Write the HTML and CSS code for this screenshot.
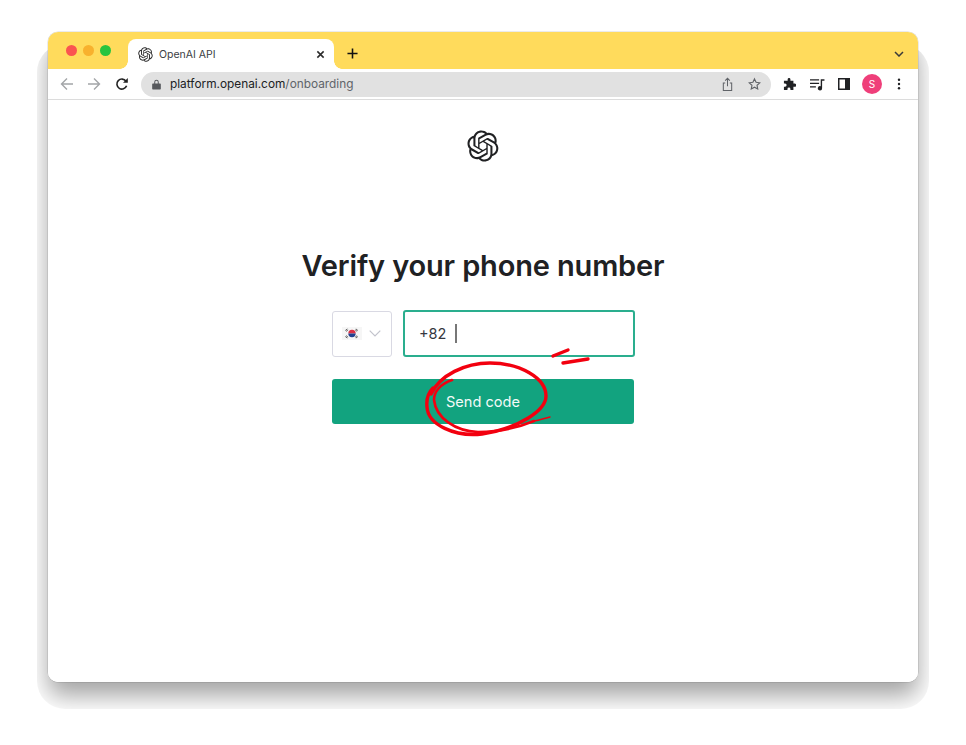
FILE: index.html
```html
<!DOCTYPE html>
<html lang="en">
<head>
<meta charset="utf-8">
<title>OpenAI API</title>
<link rel="stylesheet" href="styles.css">
</head>
<body>
<svg width="0" height="0" class="defs"><defs>
<symbol id="oai" viewBox="0 0 41 41"><path fill-rule="evenodd" fill="currentColor" d="M37.5324 16.8707C37.9808 15.5241 38.1363 14.0974 37.9886 12.6859C37.8409 11.2744 37.3934 9.91076 36.676 8.68622C35.6126 6.83404 33.9882 5.36767 32.0373 4.4985C30.0864 3.62933 27.9098 3.40223 25.8215 3.85C24.8796 2.7893 23.7219 1.94181 22.4257 1.36422C21.1295 0.786638 19.7249 0.492233 18.3058 0.500809C16.1708 0.495645 14.0893 1.16803 12.3614 2.42214C10.6335 3.67624 9.34853 5.44666 8.6917 7.47815C7.30085 7.76286 5.98686 8.3414 4.8377 9.17505C3.68854 10.0087 2.73073 11.0782 2.02839 12.312C0.956464 14.1591 0.498905 16.2988 0.721698 18.4228C0.944492 20.5467 1.83612 22.5449 3.268 24.1293C2.81966 25.4759 2.66413 26.9026 2.81182 28.3141C2.95951 29.7256 3.40701 31.0892 4.12437 32.3138C5.18791 34.1659 6.8123 35.6322 8.76321 36.5013C10.7141 37.3704 12.8907 37.5973 14.9789 37.1492C15.9208 38.2107 17.0786 39.0587 18.3747 39.6366C19.6709 40.2144 21.0755 40.5087 22.4946 40.5C24.6307 40.5054 26.7133 39.8328 28.4418 38.5779C30.1704 37.3231 31.4556 35.5517 32.1119 33.5192C33.5027 33.2345 34.8167 32.6559 35.9659 31.8223C37.115 30.9886 38.0728 29.9191 38.7752 28.6853C39.8458 26.8386 40.3023 24.6994 40.0789 22.5764C39.8556 20.4534 38.9639 18.4564 37.5324 16.8707ZM22.4978 37.8849C20.7443 37.8874 19.0459 37.2733 17.6994 36.1501C17.7601 36.117 17.8666 36.0586 17.936 36.0161L25.9004 31.4156C26.1003 31.3019 26.2663 31.137 26.3813 30.9378C26.4964 30.7386 26.5563 30.5124 26.5549 30.2825V19.0542L29.9213 20.998C29.9389 21.0068 29.9541 21.0198 29.9656 21.0359C29.977 21.052 29.9842 21.0707 29.9867 21.0902V30.3889C29.9842 32.375 29.1946 34.2791 27.7909 35.6841C26.3872 37.0892 24.4838 37.8806 22.4978 37.8849ZM6.39227 31.0064C5.51397 29.4888 5.19742 27.7107 5.49804 25.9832C5.55718 26.0187 5.66048 26.0818 5.73461 26.1244L13.699 30.7248C13.8975 30.8408 14.1233 30.902 14.3532 30.902C14.583 30.902 14.8088 30.8408 15.0073 30.7248L24.731 25.1103V28.9979C24.7321 29.0177 24.7283 29.0376 24.7199 29.0556C24.7115 29.0736 24.6988 29.0893 24.6829 29.1012L16.6317 33.7497C14.9096 34.7416 12.8643 35.0097 10.9447 34.4954C9.02506 33.9811 7.38785 32.7263 6.39227 31.0064ZM4.29707 13.6194C5.17156 12.0998 6.55279 10.9364 8.19885 10.3327C8.19885 10.4013 8.19491 10.5228 8.19491 10.6071V19.808C8.19351 20.0378 8.25334 20.2638 8.36823 20.4629C8.48312 20.6619 8.64893 20.8267 8.84863 20.9404L18.5723 26.5542L15.206 28.4979C15.1894 28.5089 15.1703 28.5155 15.1505 28.5173C15.1307 28.5191 15.1107 28.516 15.0924 28.5082L7.04046 23.8557C5.32135 22.8601 4.06716 21.2235 3.55289 19.3046C3.03862 17.3858 3.30624 15.3413 4.29707 13.6194ZM31.955 20.0556L22.2312 14.4411L25.5976 12.4981C25.6142 12.4872 25.6333 12.4805 25.6531 12.4787C25.6729 12.4769 25.6928 12.4801 25.7111 12.4879L33.7631 17.1364C34.9967 17.849 36.0017 18.8982 36.6606 20.1613C37.3194 21.4244 37.6047 22.849 37.4832 24.2684C37.3617 25.6878 36.8382 27.0432 35.9743 28.1759C35.1103 29.3086 33.9415 30.1717 32.6047 30.6641C32.6047 30.5947 32.6047 30.4733 32.6047 30.3889V21.188C32.6066 20.9586 32.5474 20.7328 32.4332 20.5338C32.319 20.3348 32.154 20.1698 31.955 20.0556ZM35.3055 15.0128C35.2464 14.9765 35.1431 14.9142 35.069 14.8717L27.1045 10.2712C26.906 10.1554 26.6803 10.0943 26.4504 10.0943C26.2206 10.0943 25.9948 10.1554 25.7963 10.2712L16.0726 15.8858V11.9982C16.0715 11.9783 16.0753 11.9585 16.0837 11.9405C16.0921 11.9225 16.1048 11.9068 16.1207 11.8949L24.1719 7.25025C25.4053 6.53903 26.8158 6.19376 28.2383 6.25482C29.6608 6.31589 31.0364 6.78077 32.2044 7.59508C33.3723 8.40939 34.2842 9.53945 34.8334 10.8531C35.3826 12.1667 35.5464 13.6095 35.3055 15.0128ZM14.2424 21.9419L10.8752 19.9981C10.8576 19.9893 10.8423 19.9763 10.8309 19.9602C10.8195 19.9441 10.8122 19.9254 10.8098 19.9058V10.6071C10.8107 9.18295 11.2173 7.78848 11.9819 6.58696C12.7466 5.38544 13.8377 4.42659 15.1275 3.82264C16.4173 3.21869 17.8524 2.99464 19.2649 3.1767C20.6775 3.35876 22.0089 3.93941 23.1034 4.85067C23.0427 4.88379 22.937 4.94215 22.8668 4.98473L14.9024 9.58517C14.7025 9.69878 14.5366 9.86356 14.4215 10.0626C14.3065 10.2616 14.2466 10.4877 14.2479 10.7175L14.2424 21.9419ZM16.071 17.9991L20.4018 15.4978L24.7325 17.9975V22.9985L20.4018 25.4983L16.071 22.9985V17.9991Z"/></symbol>
</defs></svg>

<div class="window">
  <header class="tabstrip">
    <div class="lights"><i class="light red"></i><i class="light amber"></i><i class="light green"></i></div>
    <div class="tab">
      <svg class="favicon"><use href="#oai"/></svg>
      <span class="tab-title">OpenAI API</span>
      <svg class="tab-close" viewBox="0 0 10 10"><path d="M1.5 1.5l7 7M8.5 1.5l-7 7"/></svg>
    </div>
    <svg class="new-tab" viewBox="0 0 12 12"><path d="M6 .5v11M.5 6h11"/></svg>
    <svg class="tab-menu" viewBox="0 0 10 6"><path d="M1 1l4 4 4-4"/></svg>
  </header>

  <nav class="toolbar">
    <svg class="nav-icon faded" viewBox="0 0 14 14"><path d="M13 7H2M7 1.5L1.5 7 7 12.500"/></svg>
    <svg class="nav-icon faded" viewBox="0 0 14 14"><path d="M1 7h11M7 1.500L12.500 7 7 12.500"/></svg>
    <svg class="nav-icon reload" viewBox="0 0 14 14"><path d="M11.600 8.800A5 5 0 1 1 11 4.200"/><path class="solid" d="M12.800 1v4.800H8z"/></svg>
    <div class="omnibox">
      <svg class="lock" viewBox="0 0 10 12"><path d="M1 5h8a.8.8 0 0 1 .8.800v5a.8.8 0 0 1-.8.800H1a.8.8 0 0 1-.8-.8v-5A.8.8 0 0 1 1 5zM2.500 5V3.300a2.500 2.500 0 0 1 5 0V5H6.400V3.300a1.400 1.400 0 0 0-2.800 0V5z"/></svg>
      <span class="url">platform.openai.com<span class="url-path">/onboarding</span></span>
      <svg class="omni-icon share" viewBox="0 0 14 16"><path d="M7 10V1.500M4.500 3.800L7 1.300l2.500 2.500M4.500 6.500H2.500v8h9v-8h-2"/></svg>
      <svg class="omni-icon star" viewBox="0 0 14 14"><path d="M7 1.500l1.700 3.700 4 .5-3 2.700.8 4L7 10.500l-3.500 1.900.8-4-3-2.700 4-.5z"/></svg>
    </div>
    <div class="actions">
      <svg class="tool puzzle" viewBox="0 0 14 14"><path d="M5 1.500a1.500 1.500 0 0 1 3 0V3h3.200v3H12.500a1.700 1.700 0 0 1 0 3.500h-1.300V13H8v-1.200a1.600 1.600 0 0 0-3.200 0V13H1V9.300h1.200a1.700 1.700 0 0 0 0-3.400H1V3h4z"/></svg>
      <svg class="tool media" viewBox="0 0 14 12"><path d="M0 1h8.500v1.200H0zM0 4.300h8.500v1.200H0zM0 7.600h5.500v1.200H0z"/><path d="M10 1h3.500v1.600h-2.200V9.500a2 2 0 1 1-1.300-1.800z"/></svg>
      <svg class="tool panel" viewBox="0 0 12 12"><path fill-rule="evenodd" d="M0 0h12v12H0zM1.500 1.500v9h5.500v-9z"/></svg>
      <span class="avatar">S</span>
      <svg class="tool dots" viewBox="0 0 4 14"><circle cx="2" cy="2" r="1.400"/><circle cx="2" cy="7" r="1.400"/><circle cx="2" cy="12" r="1.400"/></svg>
    </div>
  </nav>

  <main class="page">
    <svg class="logo"><use href="#oai"/></svg>
    <h1 class="heading">Verify your phone number</h1>
    <form class="phone-form">
      <div class="phone-row">
        <div class="country">
          <svg class="flag" viewBox="0 0 20 13">
            <rect width="20" height="13" fill="#f6f6f6"/>
            <path d="M6.300 6.500a3.700 3.700 0 0 1 7.400 0z" fill="#dc3045"/>
            <path d="M6.300 6.500a3.700 3.700 0 0 0 7.400 0z" fill="#23408f"/>
            <path d="M3.300 3.500l2-1.600M4.100 4.400l2-1.600M13.900 1.900l2 1.600M13.100 2.800l2 1.600M3.300 9.500l2 1.600M4.100 8.600l2 1.600M13.900 11.100l2-1.600M13.100 10.200l2-1.600" stroke="#555" stroke-width=".9"/>
          </svg>
          <svg class="chev" viewBox="0 0 12 7"><path d="M.7.700L6 6l5.300-5.300"/></svg>
        </div>
        <div class="phone-input"><span class="dial">+82</span><i class="caret"></i></div>
      </div>
      <button class="send" type="button">Send code</button>
    </form>
  </main>
</div>

<svg class="scribble" viewBox="0 0 966 745">
  <path class="thick" d="M431 394C440 375 465 363 490 363C520 363 546 378 546 396C546 410 520 428 482 434C455 437 428 425 427 407C426 398 429 392 433 388"/>
  <path class="mid" d="M452 380C440 384 434 392 434 400C436 418 455 431 478 432C505 432 522 426 534 421"/>
  <path d="M534 421C540 420 545 418 550 417"/>
  <path class="thick" d="M553 356L568 350"/>
  <path class="thick" d="M563 363L588 359"/>
</svg>
</body>
</html>
```
FILE: styles.css
```css
* { box-sizing: border-box; }
html, body { margin: 0; height: 100%; background: #fff; }
body {
  padding: 32px 48px 63px;
  font-family: "Inter", "Liberation Sans", sans-serif;
  overflow: hidden;
  isolation: isolate;
}
.defs { display: block; height: 0; }

.window {
  position: relative;
  height: 650px;
  background: #fff;
  border-radius: 10px;
  display: flex;
  flex-direction: column;
  box-shadow: 0 0 0 .5px rgba(0, 0, 0, .16);
}
.window::before {
  content: "";
  position: absolute;
  inset: 0;
  z-index: -1;
  border-radius: 10px;
  box-shadow: 0 14px 24px rgba(0, 0, 0, .36);
  clip-path: inset(12px -11px -27px -11px round 28px);
}

/* tab strip */
.tabstrip {
  height: 37px;
  flex: none;
  display: flex;
  align-items: flex-end;
  background: #ffdb5c;
  border-radius: 10px 10px 0 0;
}
.lights { display: flex; gap: 6px; align-self: flex-start; margin: 13px 0 0 18px; }
.light { width: 11px; height: 11px; border-radius: 50%; display: block; }
.red { background: #fa5450; }
.amber { background: #f8b12d; }
.green { background: #28c43f; }
.tab {
  position: relative;
  width: 206px;
  height: 30px;
  margin-left: 17px;
  padding: 0 9px 0 10px;
  background: #fff;
  border-radius: 8px 8px 0 0;
  display: flex;
  align-items: center;
  color: #3c4043;
}
.tab::before, .tab::after {
  content: "";
  position: absolute;
  bottom: 0;
  width: 8px;
  height: 8px;
  background: radial-gradient(circle at 0 0, transparent 7.500px, #fff 8px);
}
.tab::before { left: -8px; }
.tab::after { right: -8px; transform: scaleX(-1); }
.favicon { width: 15px; height: 15px; color: #2b2b2b; flex: none; }
.tab-title { margin-left: 6px; font-size: 10.500px; flex: 1; white-space: nowrap; }
.tab-close { width: 9px; height: 9px; fill: none; stroke: #2a2a2a; stroke-width: 1.700; }
.new-tab {
  width: 11px; height: 11px; margin: 0 0 10px 13px;
  fill: none; stroke: #111; stroke-width: 1.700;
}
.tab-menu {
  width: 10px; height: 6px; margin: 0 14px 12px auto;
  fill: none; stroke: #3a3a3a; stroke-width: 1.500;
}

/* toolbar */
.toolbar {
  height: 31px;
  flex: none;
  display: flex;
  align-items: center;
  padding: 1px 0 0 12px;
  background: #fff;
  border-bottom: 1px solid #dcdcdc;
}
.nav-icon { width: 14px; height: 14px; flex: none; margin: 0 13px 1px 0; fill: none; stroke: #5f6368; stroke-width: 1.400; }
.nav-icon.faded { stroke: #a3a5a8; }
.nav-icon.reload { stroke: #222; stroke-width: 1.600; margin-left: 1px; margin-right: 12px; }
.solid { fill: #222; stroke: none; }
.omnibox {
  width: 630px;
  height: 25px;
  flex: none;
  display: flex;
  align-items: center;
  padding: 0 10px 0 11px;
  background: #e1e1e1;
  border-radius: 13px;
}
.lock { width: 9px; height: 11px; fill: #56585c; flex: none; margin-bottom: 1px; }
.url { margin: 0 0 1px 9px; font-size: 11.850px; color: #202124; flex: 1; white-space: nowrap; }
.url-path { color: #60646a; }
.omni-icon { width: 13px; height: 15px; flex: none; fill: none; stroke: #606368; stroke-width: 1.100; margin-bottom: 1px; }
.omni-icon.star { margin-left: 14px; height: 14px; stroke-width: 1.200; }
.actions { display: flex; align-items: center; margin: 0 0 1px 12px; }
.tool { fill: #202124; flex: none; }
.puzzle { width: 13px; height: 13px; }
.media { width: 15px; height: 13px; margin-left: 14px; }
.panel { width: 12px; height: 12px; margin-left: 13px; }
.dots { width: 4px; height: 12px; margin-left: 15px; }
.avatar {
  width: 20px; height: 20px; border-radius: 50%;
  margin-left: 12px;
  background: #ef3f7a; color: #fff;
  font-size: 10px; display: flex; align-items: center; justify-content: center;
}

/* page */
.page {
  flex: 1;
  display: flex;
  flex-direction: column;
  align-items: center;
  background: #fff;
  border-radius: 0 0 10px 10px;
}
.logo { width: 32px; height: 32px; margin-top: 30px; color: #202123; flex: none; }
.heading {
  margin: 86px 0 0;
  font-size: 29px;
  font-weight: 600;
  line-height: 36px;
  letter-spacing: -.15px;
  color: #202123;
}
.phone-form { width: 303px; margin-top: 26px; margin-left: 1px; display: flex; flex-direction: column; gap: 22px; }
.phone-row { display: flex; gap: 11px; align-items: center; }
.country {
  width: 60px; height: 46px; flex: none;
  border: 1px solid #d9d9e3;
  border-radius: 3px;
  display: flex;
  align-items: center;
  padding-left: 9px;
  gap: 7px;
}
.flag { width: 20px; height: 13px; flex: none; }
.chev { width: 12px; height: 7px; fill: none; stroke: #c2c3cc; stroke-width: 1.200; flex: none; }
.phone-input {
  flex: 1;
  height: 47px;
  border: 2px solid #2aae8e;
  border-radius: 3px;
  display: flex;
  align-items: center;
  padding-left: 14px;
}
.dial { font-size: 14.500px; color: #353740; }
.caret { width: 1.500px; height: 19px; margin-left: 9px; background: #777; display: block; }
.send {
  height: 45px;
  border: 0;
  border-radius: 3px;
  background: #12a37f;
  color: #f4faf8;
  font: 400 14.600px "Inter", "Liberation Sans", sans-serif;
  width: 302px;
}

/* red annotation */
.scribble {
  position: absolute;
  left: 0; top: 0;
  width: 966px; height: 745px;
  fill: none;
  stroke: #f2000f;
  stroke-width: 1.500;
  stroke-linecap: round;
  pointer-events: none;
}
.scribble .thick { stroke-width: 3.400; }
.scribble .mid { stroke-width: 2.600; }
```
